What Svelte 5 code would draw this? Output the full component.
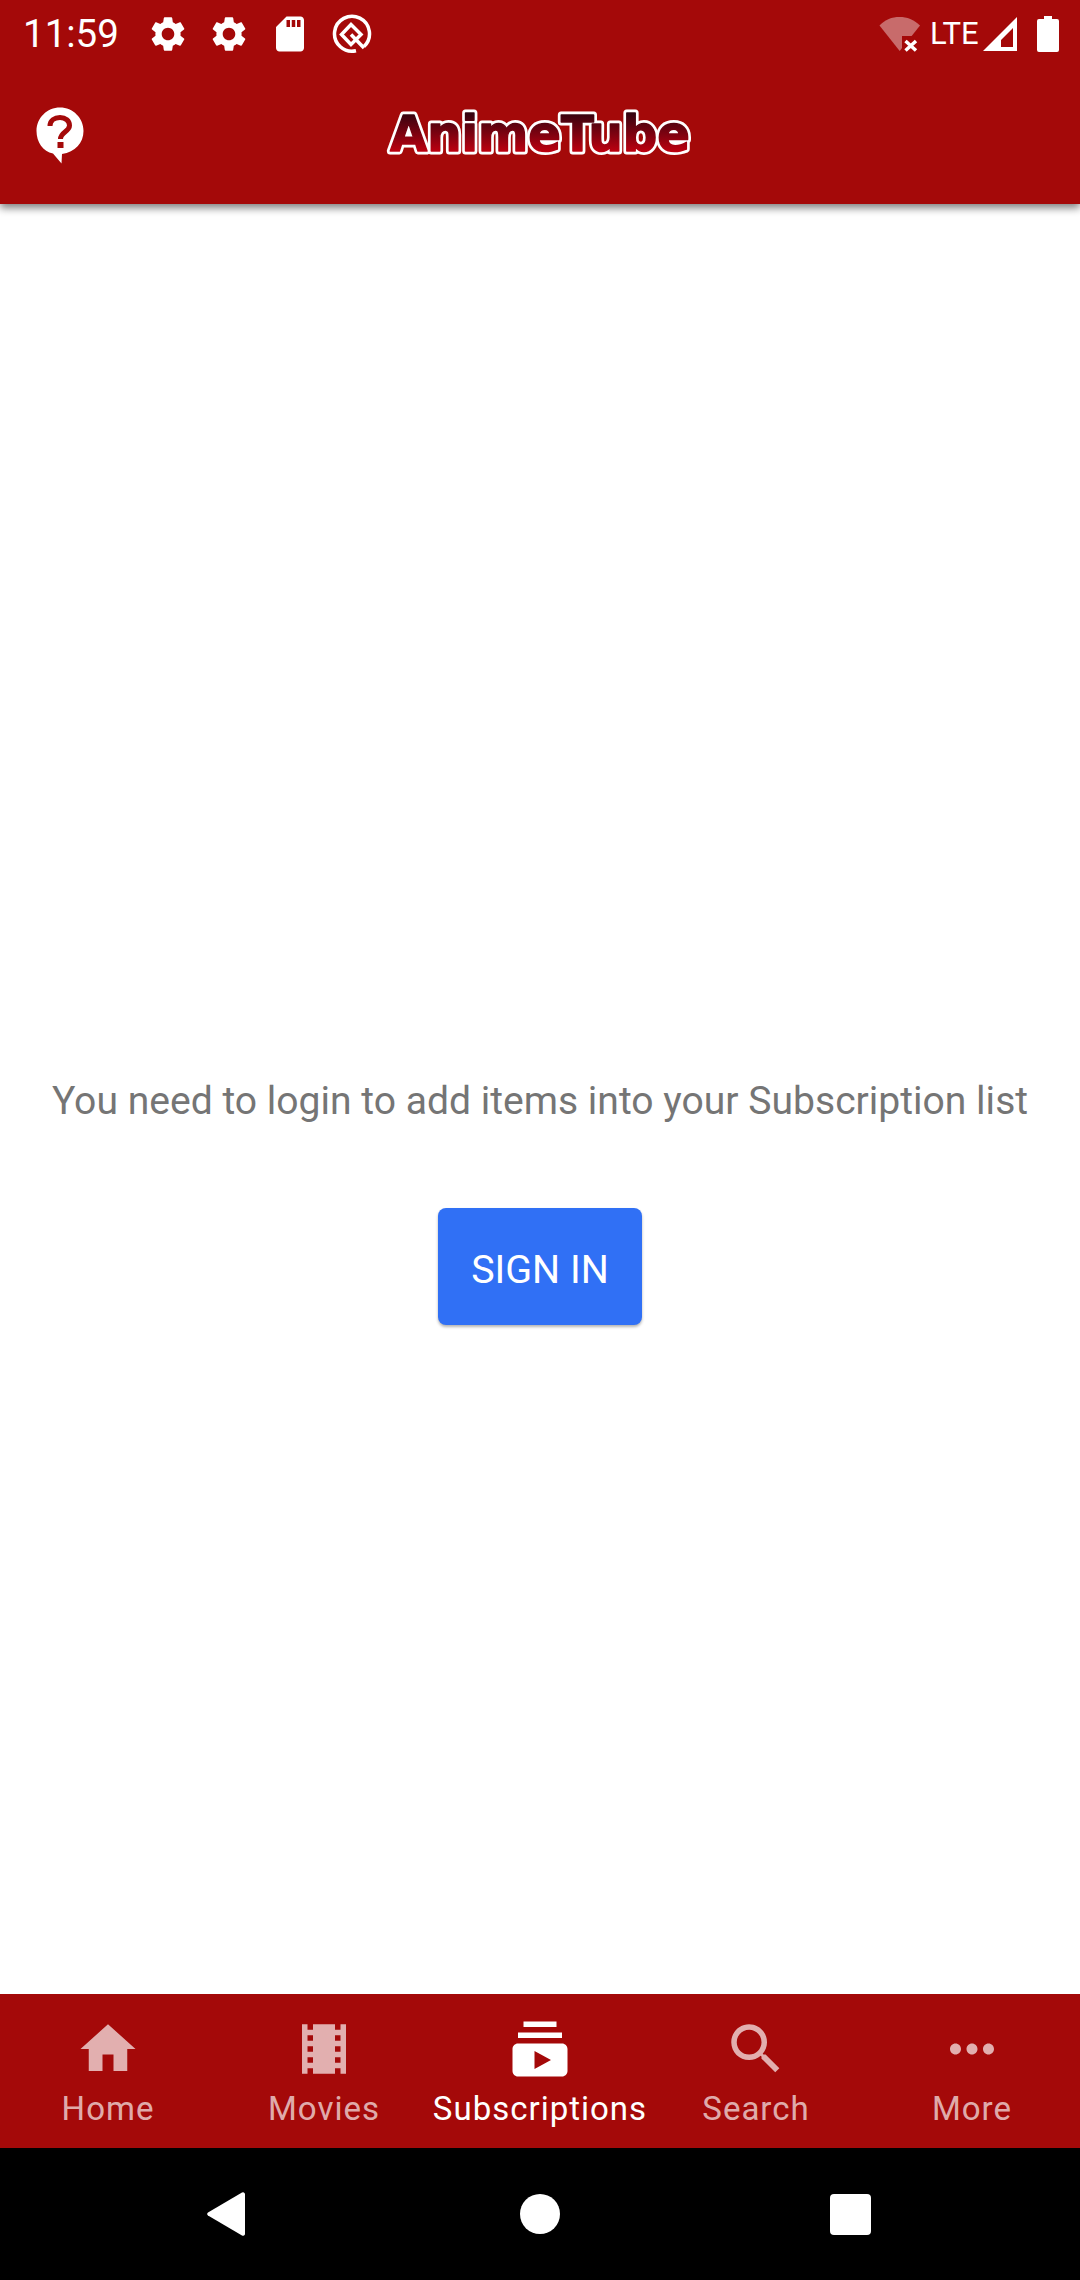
<script>
  const tabs = [
    { label: 'Home', d: 'M10 20v-6h4v6h5v-8h3L12 3 2 12h3v8z' },
    { label: 'Movies', d: 'M18 3v2h-2V3H8v2H6V3H4v18h2v-2h2v2h8v-2h2v2h2V3h-2zM8 17H6v-2h2v2zm0-4H6v-2h2v2zm0-4H6V7h2v2zm10 8h-2v-2h2v2zm0-4h-2v-2h2v2zm0-4h-2V7h2v2z' },
    { label: 'Subscriptions', active: true, d: 'M20 8H4V6h16v2zm-2-6H6v2h12V2zm4 10v8c0 1.1-.9 2-2 2H4c-1.1 0-2-.9-2-2v-8c0-1.1.9-2 2-2h16c1.1 0 2 .9 2 2zm-6 4l-6-3.27v6.53L16 16z' },
    { label: 'Search', d: 'M15.5 14h-.79l-.28-.27C15.41 12.59 16 11.11 16 9.5 16 5.91 13.09 3 9.5 3S3 5.91 3 9.5 5.91 16 9.5 16c1.61 0 3.09-.59 4.23-1.57l.27.28v.79l5 4.99L20.49 19l-4.99-5zm-6 0C7.01 14 5 11.99 5 9.5S7.01 5 9.5 5 14 7.01 14 9.5 11.99 14 9.5 14z' },
    { label: 'More', d: 'M6 10c-1.1 0-2 .9-2 2s.9 2 2 2 2-.9 2-2-.9-2-2-2zm12 0c-1.1 0-2 .9-2 2s.9 2 2 2 2-.9 2-2-.9-2-2-2zm-6 0c-1.1 0-2 .9-2 2s.9 2 2 2 2-.9 2-2-.9-2-2-2z' }
  ];
  const gear = 'M19.14 12.94c.04-.3.06-.61.06-.94 0-.32-.02-.64-.07-.94l2.03-1.58c.18-.14.23-.41.12-.61l-1.92-3.32c-.12-.22-.37-.29-.59-.22l-2.39.96c-.5-.38-1.03-.7-1.62-.94l-.36-2.54c-.04-.24-.24-.41-.48-.41h-3.84c-.24 0-.43.17-.47.41l-.36 2.54c-.59.24-1.13.57-1.62.94l-2.39-.96c-.22-.08-.47 0-.59.22L2.74 8.87c-.12.21-.08.47.12.61l2.03 1.58c-.05.3-.09.63-.09.94s.02.64.07.94l-2.03 1.58c-.18.14-.23.41-.12.61l1.92 3.32c.12.22.37.29.59.22l2.39-.96c.5.38 1.03.7 1.62.94l.36 2.54c.05.24.24.41.48.41h3.84c.24 0 .44-.17.47-.41l.36-2.54c.59-.24 1.13-.56 1.62-.94l2.39.96c.22.08.47 0 .59-.22l1.92-3.32c.12-.22.07-.47-.12-.61l-2.01-1.58zM12 15.6c-1.98 0-3.6-1.62-3.6-3.6s1.62-3.6 3.6-3.6 3.6 1.62 3.6 3.6-1.62 3.6-3.6 3.6z';
</script>

<div class="screen">
  <header class="top">
    <div class="status">
      <span class="time">11:59</span>
      <div class="left-icons">
        <svg class="s42" viewBox="0 0 24 24"><path fill="#fff" d={gear} /></svg>
        <svg class="s42" viewBox="0 0 24 24"><path fill="#fff" d={gear} /></svg>
        <svg class="s42" viewBox="0 0 24 24"><path fill="#fff" d="M18 2h-8L4.020 8 4 20c0 1.100.9 2 2 2h12c1.100 0 2-.9 2-2V4c0-1.100-.9-2-2-2zm-6 6h-2V4h2v4zm3 0h-2V4h2v4zm3 0h-2V4h2v4z" /></svg>
        <svg class="s42" viewBox="0 0 42 42">
          <path d="M34 33.500A17.500 17.500 0 1 0 26 37.800" fill="none" stroke="#fff" stroke-width="3.500" />
          <path d="M21 11.500 31 21.500 21 31.500 11.500 21.500Z" fill="none" stroke="#fff" stroke-width="3.500" />
          <path d="M21 21.500 34 35" fill="none" stroke="#fff" stroke-width="3.500" />
        </svg>
      </div>
      <div class="right-icons">
        <svg class="wifi" viewBox="0 0 42 36">
          <path d="M0.500 9.500C6 3.500 13 1 20.500 1S35 3.500 41 9.500L20.700 35Z" fill="#fff" opacity=".4" />
          <rect x="23" y="20" width="18" height="16" fill="#a40909" />
          <path d="M26.500 25 37 34.500M37 25 26.500 34.500" stroke="#fff" stroke-width="3.500" />
        </svg>
        <span class="lte">LTE</span>
        <svg class="signal" viewBox="0 0 36 36">
          <path fill="#fff" fill-rule="evenodd" d="M35 1V35H1ZM31 12 19 24V31H31Z" />
        </svg>
        <svg class="battery" viewBox="0 0 22 36"><path fill="#fff" d="M7 0h8v3h5a2 2 0 0 1 2 2v29a2 2 0 0 1-2 2H2a2 2 0 0 1-2-2V5a2 2 0 0 1 2-2h5z" /></svg>
      </div>
    </div>
    <div class="appbar">
      <svg class="help" viewBox="0 0 48 57">
        <path fill="#fff" d="M24 0.500C37 .5 47.500 11 47.500 24C47.500 36 39 45 26 47L25.500 56.500L17 46.500C7 44.500 .5 35 .5 24C.5 11 11 .5 24 .5Z" />
        <path d="M14 19C14 13.500 18.500 10.500 24 10.500C29.500 10.500 33.500 13.800 33.500 18.500C33.500 24.500 24.500 25 24.500 32" fill="none" stroke="#a40909" stroke-width="5" />
        <rect x="21.500" y="35" width="6" height="6" fill="#a40909" />
      </svg>
      <svg class="logo" viewBox="0 0 310 50">
        <defs>
          <linearGradient id="lg" x1="0" y1="0" x2="0" y2="1">
            <stop offset="0.1" stop-color="#2c0410" />
            <stop offset="0.9" stop-color="#d00010" />
          </linearGradient>
        </defs>
        <text x="155" y="42" text-anchor="middle" textLength="300" lengthAdjust="spacingAndGlyphs" class="logotext outline">AnimeTube</text>
        <text x="155" y="42" text-anchor="middle" textLength="300" lengthAdjust="spacingAndGlyphs" class="logotext">AnimeTube</text>
      </svg>
      <span></span>
    </div>
  </header>

  <main class="content">
    <p class="msg">You need to login to add items into your Subscription list</p>
    <button class="signin">SIGN IN</button>
  </main>

  <nav class="tabs">
    {#each tabs as t}
      <div class="tab" class:active={t.active}>
        <svg class="tabicon" viewBox="0 0 24 24"><path fill="currentColor" d={t.d} /></svg>
        <span class="label">{t.label}</span>
      </div>
    {/each}
  </nav>

  <footer class="sysnav">
    <svg class="back" viewBox="0 0 40 46"><path fill="#fff" d="M36 1.500 2 21.500a2 2 0 0 0 0 3L36 44.500a2 2 0 0 0 3-1.500V3a2 2 0 0 0-3-1.500Z" /></svg>
    <div class="homebtn"></div>
    <div class="recents"></div>
  </footer>
</div>

<style>
  :global(body) {
    margin: 0;
    background: #fff;
  }
  .screen {
    width: 1080px;
    height: 2280px;
    display: flex;
    flex-direction: column;
    font-family: Roboto, "Liberation Sans", sans-serif;
    overflow: hidden;
  }
  .top {
    background: #a40909;
    height: 204px;
    flex: none;
    box-shadow: 0 4px 8px rgba(0, 0, 0, 0.5);
    position: relative;
    z-index: 1;
  }
  .status {
    height: 63px;
    display: flex;
    align-items: center;
    padding: 4px 21px 0 23px;
    box-sizing: border-box;
    color: #fff;
  }
  .time {
    font-size: 38.500px;
    width: 124px;
  }
  .left-icons {
    display: flex;
    align-items: center;
    gap: 19px;
  }
  .s42 {
    width: 42px;
    height: 42px;
    display: block;
  }
  .right-icons {
    margin-left: auto;
    display: flex;
    align-items: center;
  }
  .wifi {
    width: 42px;
    height: 36px;
    margin-right: 13px;
  }
  .lte {
    font-size: 31px;
    width: 52px;
    margin-left: -4px;
  }
  .signal {
    width: 36px;
    height: 36px;
    margin-right: 19px;
  }
  .battery {
    width: 22px;
    height: 36px;
  }
  .appbar {
    height: 141px;
    display: grid;
    grid-template-columns: 1fr auto 1fr;
    align-items: center;
    box-sizing: border-box;
  }
  .help {
    width: 48px;
    height: 57px;
    margin-left: 36px;
    margin-top: 3px;
  }
  .logo {
    width: 310px;
    height: 50px;
    overflow: visible;
  }
  .logotext {
    font-family: "DejaVu Sans", sans-serif;
    font-weight: 700;
    font-size: 50px;
    fill: url(#lg);
    stroke: url(#lg);
    stroke-width: 1.500px;
    stroke-linejoin: round;
  }
  .logotext.outline {
    fill: #fff;
    stroke: #fff;
    stroke-width: 7px;
  }
  .content {
    flex: 1;
    display: flex;
    flex-direction: column;
    align-items: center;
    padding-top: 873px;
    box-sizing: border-box;
  }
  .msg {
    margin: 0;
    font-size: 39.100px;
    line-height: 48px;
    color: #757575;
    white-space: nowrap;
  }
  .signin {
    margin-top: 83px;
    width: 204px;
    height: 117px;
    border: none;
    border-radius: 8px;
    background: #3070f5;
    color: #fff;
    font-family: inherit;
    font-size: 39.400px;
    padding: 5px 0 0;
    box-shadow: 0 2px 3px rgba(0, 0, 0, 0.3);
  }
  .tabs {
    height: 154px;
    flex: none;
    background: #a40909;
    display: flex;
  }
  .tab {
    flex: 1;
    display: flex;
    flex-direction: column;
    align-items: center;
    color: rgba(255, 255, 255, 0.68);
    padding-top: 22px;
  }
  .tab.active {
    color: #fff;
  }
  .tabicon {
    width: 66px;
    height: 66px;
  }
  .label {
    font-size: 33px;
    letter-spacing: 1px;
    line-height: 40px;
    margin-top: 7px;
    white-space: nowrap;
  }
  .sysnav {
    height: 132px;
    flex: none;
    background: #000;
    display: flex;
    align-items: center;
    position: relative;
    padding-left: 206px;
  }
  .back {
    width: 40px;
    height: 46px;
  }
  .homebtn {
    width: 40px;
    height: 40px;
    border-radius: 50%;
    background: #fff;
    margin-left: 274px;
  }
  .recents {
    width: 41px;
    height: 41px;
    border-radius: 4px;
    background: #fff;
    margin-left: 270px;
  }
</style>
